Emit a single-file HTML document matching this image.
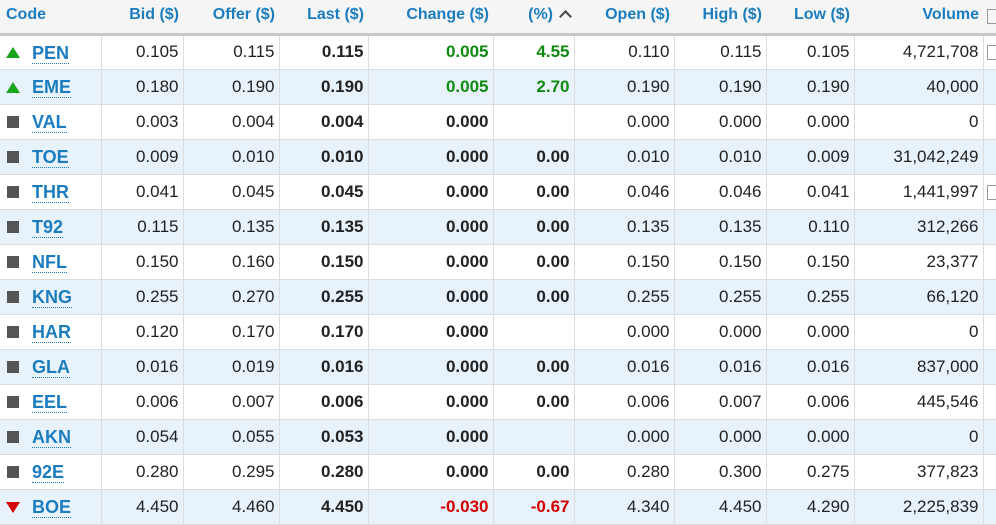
<!DOCTYPE html>
<html><head><meta charset="utf-8"><style>
body{margin:0;background:#fff;font-family:"Liberation Sans",Arial,sans-serif;width:996px;height:522px;overflow:hidden}
table{border-collapse:collapse;table-layout:fixed;width:996px}
th{height:34px;background:#f5f5f5;color:#1b7dc0;font-size:16px;font-weight:bold;text-align:right;padding:0 4px 3px 0;border-bottom:3px solid #c8c8c8;box-sizing:border-box}
th:first-child{text-align:left;padding-left:6px}
td{height:35px;box-sizing:border-box;border-bottom:1px solid #dcdcdc;border-right:1px solid #dcdcdc;text-align:right;padding:0 4px 0 0;font-size:17px;color:#222}
tr:nth-child(odd) td{background:#e8f2fa}
td:first-child{text-align:left;padding-left:6px;position:relative}
td:last-child{border-right:none}
.c{color:#1b7dc0;font-weight:bold;border-bottom:1px dotted #1b7dc0;position:absolute;left:32px;top:7px;line-height:20px;font-size:18px}
.b{font-weight:bold}
.g{color:#118a11;font-weight:bold}
.r{color:#d40000;font-weight:bold}
.up{display:inline-block;width:0;height:0;border-left:7px solid transparent;border-right:7px solid transparent;border-bottom:11px solid #1aa41a;vertical-align:middle}
.dn{display:inline-block;width:0;height:0;border-left:7px solid transparent;border-right:7px solid transparent;border-top:11px solid #d40000;vertical-align:middle}
.sq{display:inline-block;width:12px;height:12px;background:#555;vertical-align:middle;margin-left:1px}
.bx{display:inline-block;width:8px;height:13px;border:1px solid #999;border-right:none;margin-left:6px;vertical-align:middle}
.ar{display:inline-block;width:7px;height:7px;border-left:2.5px solid #444;border-top:2.5px solid #444;transform:rotate(45deg);margin-left:8px;vertical-align:-2px}
</style></head><body>
<table>
<colgroup><col style="width:101px"><col style="width:82px"><col style="width:96px"><col style="width:89px"><col style="width:125px"><col style="width:81px"><col style="width:100px"><col style="width:92px"><col style="width:88px"><col style="width:129px"><col style="width:13px"></colgroup>
<tr><th>Code</th><th>Bid ($)</th><th>Offer ($)</th><th>Last ($)</th><th>Change ($)</th><th>(%)<span class="ar"></span></th><th>Open ($)</th><th>High ($)</th><th>Low ($)</th><th>Volume</th><th style="padding:0"><span class="bx" style="margin-left:3px"></span></th></tr>
<tr><td><span class="up"></span><span class="c">PEN</span></td><td>0.105</td><td>0.115</td><td class="b">0.115</td><td class="g">0.005</td><td class="g">4.55</td><td>0.110</td><td>0.115</td><td>0.105</td><td>4,721,708</td><td style="padding:0"><span class="bx" style="margin-left:3px"></span></td></tr>
<tr><td><span class="up"></span><span class="c">EME</span></td><td>0.180</td><td>0.190</td><td class="b">0.190</td><td class="g">0.005</td><td class="g">2.70</td><td>0.190</td><td>0.190</td><td>0.190</td><td>40,000</td><td></td></tr>
<tr><td><span class="sq"></span><span class="c">VAL</span></td><td>0.003</td><td>0.004</td><td class="b">0.004</td><td class="b">0.000</td><td></td><td>0.000</td><td>0.000</td><td>0.000</td><td>0</td><td></td></tr>
<tr><td><span class="sq"></span><span class="c">TOE</span></td><td>0.009</td><td>0.010</td><td class="b">0.010</td><td class="b">0.000</td><td class="b">0.00</td><td>0.010</td><td>0.010</td><td>0.009</td><td>31,042,249</td><td></td></tr>
<tr><td><span class="sq"></span><span class="c">THR</span></td><td>0.041</td><td>0.045</td><td class="b">0.045</td><td class="b">0.000</td><td class="b">0.00</td><td>0.046</td><td>0.046</td><td>0.041</td><td>1,441,997</td><td style="padding:0"><span class="bx" style="margin-left:3px"></span></td></tr>
<tr><td><span class="sq"></span><span class="c">T92</span></td><td>0.115</td><td>0.135</td><td class="b">0.135</td><td class="b">0.000</td><td class="b">0.00</td><td>0.135</td><td>0.135</td><td>0.110</td><td>312,266</td><td></td></tr>
<tr><td><span class="sq"></span><span class="c">NFL</span></td><td>0.150</td><td>0.160</td><td class="b">0.150</td><td class="b">0.000</td><td class="b">0.00</td><td>0.150</td><td>0.150</td><td>0.150</td><td>23,377</td><td></td></tr>
<tr><td><span class="sq"></span><span class="c">KNG</span></td><td>0.255</td><td>0.270</td><td class="b">0.255</td><td class="b">0.000</td><td class="b">0.00</td><td>0.255</td><td>0.255</td><td>0.255</td><td>66,120</td><td></td></tr>
<tr><td><span class="sq"></span><span class="c">HAR</span></td><td>0.120</td><td>0.170</td><td class="b">0.170</td><td class="b">0.000</td><td></td><td>0.000</td><td>0.000</td><td>0.000</td><td>0</td><td></td></tr>
<tr><td><span class="sq"></span><span class="c">GLA</span></td><td>0.016</td><td>0.019</td><td class="b">0.016</td><td class="b">0.000</td><td class="b">0.00</td><td>0.016</td><td>0.016</td><td>0.016</td><td>837,000</td><td></td></tr>
<tr><td><span class="sq"></span><span class="c">EEL</span></td><td>0.006</td><td>0.007</td><td class="b">0.006</td><td class="b">0.000</td><td class="b">0.00</td><td>0.006</td><td>0.007</td><td>0.006</td><td>445,546</td><td></td></tr>
<tr><td><span class="sq"></span><span class="c">AKN</span></td><td>0.054</td><td>0.055</td><td class="b">0.053</td><td class="b">0.000</td><td></td><td>0.000</td><td>0.000</td><td>0.000</td><td>0</td><td></td></tr>
<tr><td><span class="sq"></span><span class="c">92E</span></td><td>0.280</td><td>0.295</td><td class="b">0.280</td><td class="b">0.000</td><td class="b">0.00</td><td>0.280</td><td>0.300</td><td>0.275</td><td>377,823</td><td></td></tr>
<tr><td><span class="dn"></span><span class="c">BOE</span></td><td>4.450</td><td>4.460</td><td class="b">4.450</td><td class="r">-0.030</td><td class="r">-0.67</td><td>4.340</td><td>4.450</td><td>4.290</td><td>2,225,839</td><td></td></tr>
</table>
</body></html>
